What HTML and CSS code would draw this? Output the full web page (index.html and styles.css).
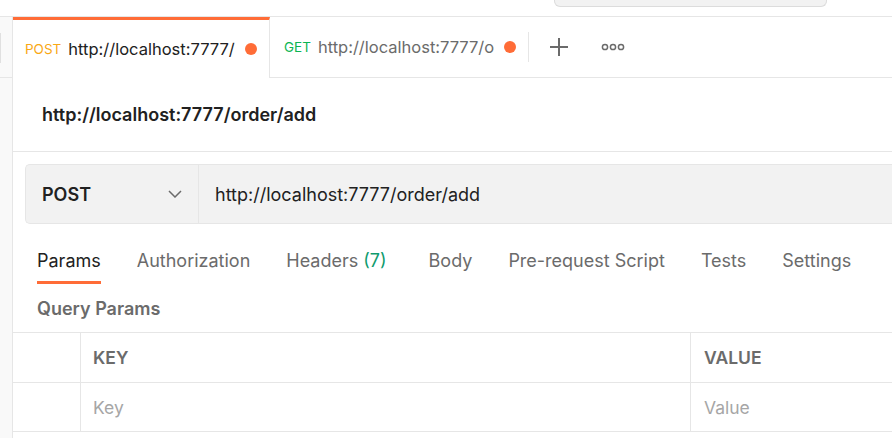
FILE: index.html
```html
<!DOCTYPE html>
<html>
<head>
<meta charset="utf-8">
<link rel="stylesheet" href="styles.css">
</head>
<body>
<div class="topbar"><div class="search"></div></div>
<div class="main">
  <div class="side"><div class="side-tab"></div></div>
  <div class="content">
    <div class="tabbar">
      <div class="tab active">
        <span class="m post">POST</span>
        <span class="turl">http://localhost:7777/</span>
        <span class="dot"></span>
      </div>
      <div class="tab second">
        <span class="m get">GET</span>
        <span class="turl grey">http://localhost:7777/o</span>
        <span class="dot"></span>
      </div>
      <div class="divider"></div>
      <svg class="plus" width="18" height="18" viewBox="0 0 18 18"><path d="M9 0v18M0 9h18" stroke="#6b6b6b" stroke-width="2" fill="none"/></svg>
      <svg class="more" width="24" height="8" viewBox="0 0 24 8"><circle cx="4" cy="4" r="2.6" stroke="#6b6b6b" stroke-width="1.5" fill="none"/><circle cx="12" cy="4" r="2.6" stroke="#6b6b6b" stroke-width="1.5" fill="none"/><circle cx="20" cy="4" r="2.6" stroke="#6b6b6b" stroke-width="1.5" fill="none"/></svg>
    </div>
    <div class="heading">http://localhost:7777/order/add</div>
    <div class="urlbox">
      <div class="method">
        <span>POST</span>
        <svg width="14" height="8" viewBox="0 0 14 8"><path d="M1 1l6 6 6-6" stroke="#6b6b6b" stroke-width="1.5" fill="none"/></svg>
      </div>
      <div class="url">http://localhost:7777/order/add</div>
    </div>
    <div class="reqtabs">
      <div class="rt on">Params</div>
      <div class="rt">Authorization</div>
      <div class="rt hd">Headers <span class="cnt">(7)</span></div>
      <div class="rt">Body</div>
      <div class="rt">Pre-request Script</div>
      <div class="rt">Tests</div>
      <div class="rt">Settings</div>
    </div>
    <div class="qp">Query Params</div>
    <div class="table">
      <div class="row head">
        <div class="c0"></div>
        <div class="c1">KEY</div>
        <div class="c2">VALUE</div>
      </div>
      <div class="row">
        <div class="c0"></div>
        <div class="c1 ph">Key</div>
        <div class="c2 ph">Value</div>
      </div>
    </div>
  </div>
</div>
</body>
</html>
```
FILE: styles.css
```css
* { box-sizing: border-box; }
html, body { margin: 0; height: 100%; overflow: hidden; background: #fff; }
body { font-family: Inter, "Noto Sans", sans-serif; color: #212121; }

.topbar { height: 17px; border-bottom: 1px solid #e6e6e6; display: flex; }
.search { margin-left: 554px; width: 273px; height: 7px; background: #f2f2f2; border: 1px solid #dcdcdc; border-top: none; border-radius: 0 0 6px 6px; }

.main { display: flex; height: 421px; }
.side { width: 13px; background: #f9f9f9; border-right: 1px solid #e6e6e6; flex: none; }
.side-tab { margin-top: 16px; width: 1px; height: 30px; background: #e0e0e0; }
.side::after { content: ""; display: block; margin-top: 14px; height: 1px; background: #e6e6e6; }
.content { flex: 1; min-width: 0; overflow: hidden; }

.tabbar { height: 61px; display: flex; align-items: center; border-bottom: 1px solid #e6e6e6; }
.tab { height: 61px; display: flex; align-items: center; white-space: nowrap; flex: none; }
.tab.active { width: 257px; padding-left: 12px; border-top: 3px solid #ff6c37; border-right: 1px solid #e6e6e6; margin-bottom: -1px; height: 61px; background: #fff; }
.tab.second { width: 256px; padding-left: 14px; margin-top: -1px; }
.m { font-size: 13.5px; margin-right: 7px; }
.post { color: #f9a815; }
.get { color: #0cb552; }
.turl { font-size: 16.5px; color: #212121; overflow: hidden; }
.turl.grey { color: #6b6b6b; }
.dot { width: 12px; height: 12px; border-radius: 50%; background: #ff6c37; margin-left: 10px; flex: none; }
.divider { width: 1px; height: 30px; background: #e6e6e6; margin-left: 2px; flex: none; }
.plus { margin-left: 21px; flex: none; }
.more { margin-left: 33px; flex: none; }

.heading { height: 74px; display: flex; align-items: center; padding-left: 29px; font-size: 18px; font-weight: 600; border-bottom: 1px solid #e6e6e6; padding-bottom: 1px; }

.urlbox { margin: 12px 0 0 12px; height: 60px; display: flex; background: #f2f2f2; border: 1px solid #e6e6e6; border-right: none; border-radius: 5px 0 0 5px; }
.method { width: 173px; flex: none; display: flex; align-items: center; justify-content: space-between; padding: 0 16px 0 16px; border-right: 1px solid #e6e6e6; font-size: 18px; font-weight: 600; }
.url { display: flex; align-items: center; padding-left: 16px; font-size: 18px; }

.reqtabs { display: flex; height: 60px; align-items: stretch; padding-left: 24px; }
.rt { font-size: 18px; color: #6b6b6b; margin-right: 36px; display: flex; align-items: center; padding-top: 15px; border-bottom: 3px solid transparent; white-space: nowrap; }
.rt.hd { margin-right: 42px; }
.rt.on { color: #212121; border-bottom-color: #ff6c37; }
.cnt { color: #0f9b6e; margin-left: 5px; }

.qp { height: 48px; display: flex; align-items: center; padding-left: 24px; font-size: 18px; font-weight: 600; color: #6b6b6b; }

.table { border-top: 1px solid #e6e6e6; }
.row { display: flex; height: 50px; border-bottom: 1px solid #e6e6e6; }
.row + .row { height: 49px; }
.c0 { width: 68px; flex: none; border-right: 1px solid #e6e6e6; }
.c1 { width: 610px; flex: none; border-right: 1px solid #e6e6e6; display: flex; align-items: center; padding-left: 12px; font-size: 17.5px; }
.c2 { flex: 1; display: flex; align-items: center; padding-left: 13px; font-size: 17.5px; }
.head .c1, .head .c2 { font-weight: 600; color: #6b6b6b; }
.ph { color: #a6a6a6; }
```
